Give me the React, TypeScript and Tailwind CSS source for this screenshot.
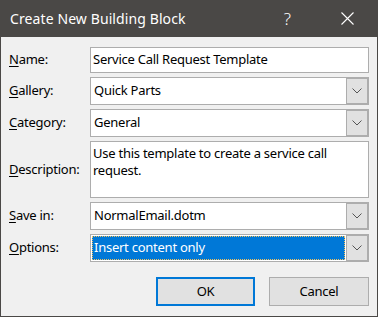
import React from 'react';

const font = { fontFamily: '"Segoe UI", "Noto Sans", sans-serif' };

const Label = ({ k, rest }: { k: string; rest: string }) => (
  <div className="flex items-center">
    <span>
      <u className="underline-offset-2">{k}</u>
      {rest}
    </span>
  </div>
);

const Chevron = () => (
  <svg width="10" height="6" viewBox="0 0 10 6" className="block">
    <path d="M0.5 0.5 L5 5 L9.5 0.5" fill="none" stroke="#555" strokeWidth="1" />
  </svg>
);

const Combo = ({ value, focused = false }: { value: string; focused?: boolean }) => (
  <div className="flex h-[28px] border border-[#adadad] bg-white">
    <div className="flex flex-1 items-stretch p-[1px]">
      {focused ? (
        <div className="flex flex-1 items-center border border-dotted border-[#f0c060] bg-[#0078d7] pl-[1px] text-white">
          {value}
        </div>
      ) : (
        <div className="flex flex-1 items-center pl-[2px]">{value}</div>
      )}
    </div>
    <div className="flex w-[22px] items-center justify-center border border-[#adadad] bg-[#e1e1e1]">
      <Chevron />
    </div>
  </div>
);

export default function App() {
  return (
    <div className="flex h-[317px] w-[378px] flex-col bg-[#4a4846]" style={font}>
      <div className="flex h-[37px] items-center pl-[10px] text-white">
        <span className="text-[14px] tracking-[0.1px]">Create New Building Block</span>
        <span className="ml-auto mr-[50px] text-[17px] font-light">?</span>
        <svg width="13" height="13" viewBox="0 0 13 13" className="mr-[24px]">
          <path d="M0.5 0.5 L12.5 12.5 M12.5 0.5 L0.5 12.5" stroke="#fff" strokeWidth="1.1" />
        </svg>
      </div>
      <div className="mx-[1px] mb-[1px] flex flex-1 flex-col bg-[#f0f0f0] pl-[8px] pr-[8px] pt-[10px] text-[13px] tracking-[-0.25px] text-black">
        <div className="grid grid-cols-[81px_1fr] gap-y-[4px]">
          <Label k="N" rest="ame:" />
          <div className="flex h-[26px] items-center border border-[#adadad] bg-white pl-[2px]">
            Service Call Request Template
          </div>
          <Label k="G" rest="allery:" />
          <Combo value="Quick Parts" />
          <Label k="C" rest="ategory:" />
          <Combo value="General" />
          <Label k="D" rest="escription:" />
          <div className="h-[57px] border border-[#adadad] bg-white pl-[2px] pr-[4px] pt-[3px] leading-[17px]">
            Use this template to create a service call request.
          </div>
          <Label k="S" rest="ave in:" />
          <Combo value="NormalEmail.dotm" />
          <Label k="O" rest="ptions:" />
          <Combo value="Insert content only" focused />
        </div>
        <div className="mt-[15px] flex justify-end gap-[14px]">
          <button className="h-[29px] w-[99px] border-2 border-[#0078d7] bg-[#e1e1e1]">OK</button>
          <button className="h-[29px] w-[100px] border border-[#adadad] bg-[#e1e1e1]">Cancel</button>
        </div>
      </div>
    </div>
  );
}
